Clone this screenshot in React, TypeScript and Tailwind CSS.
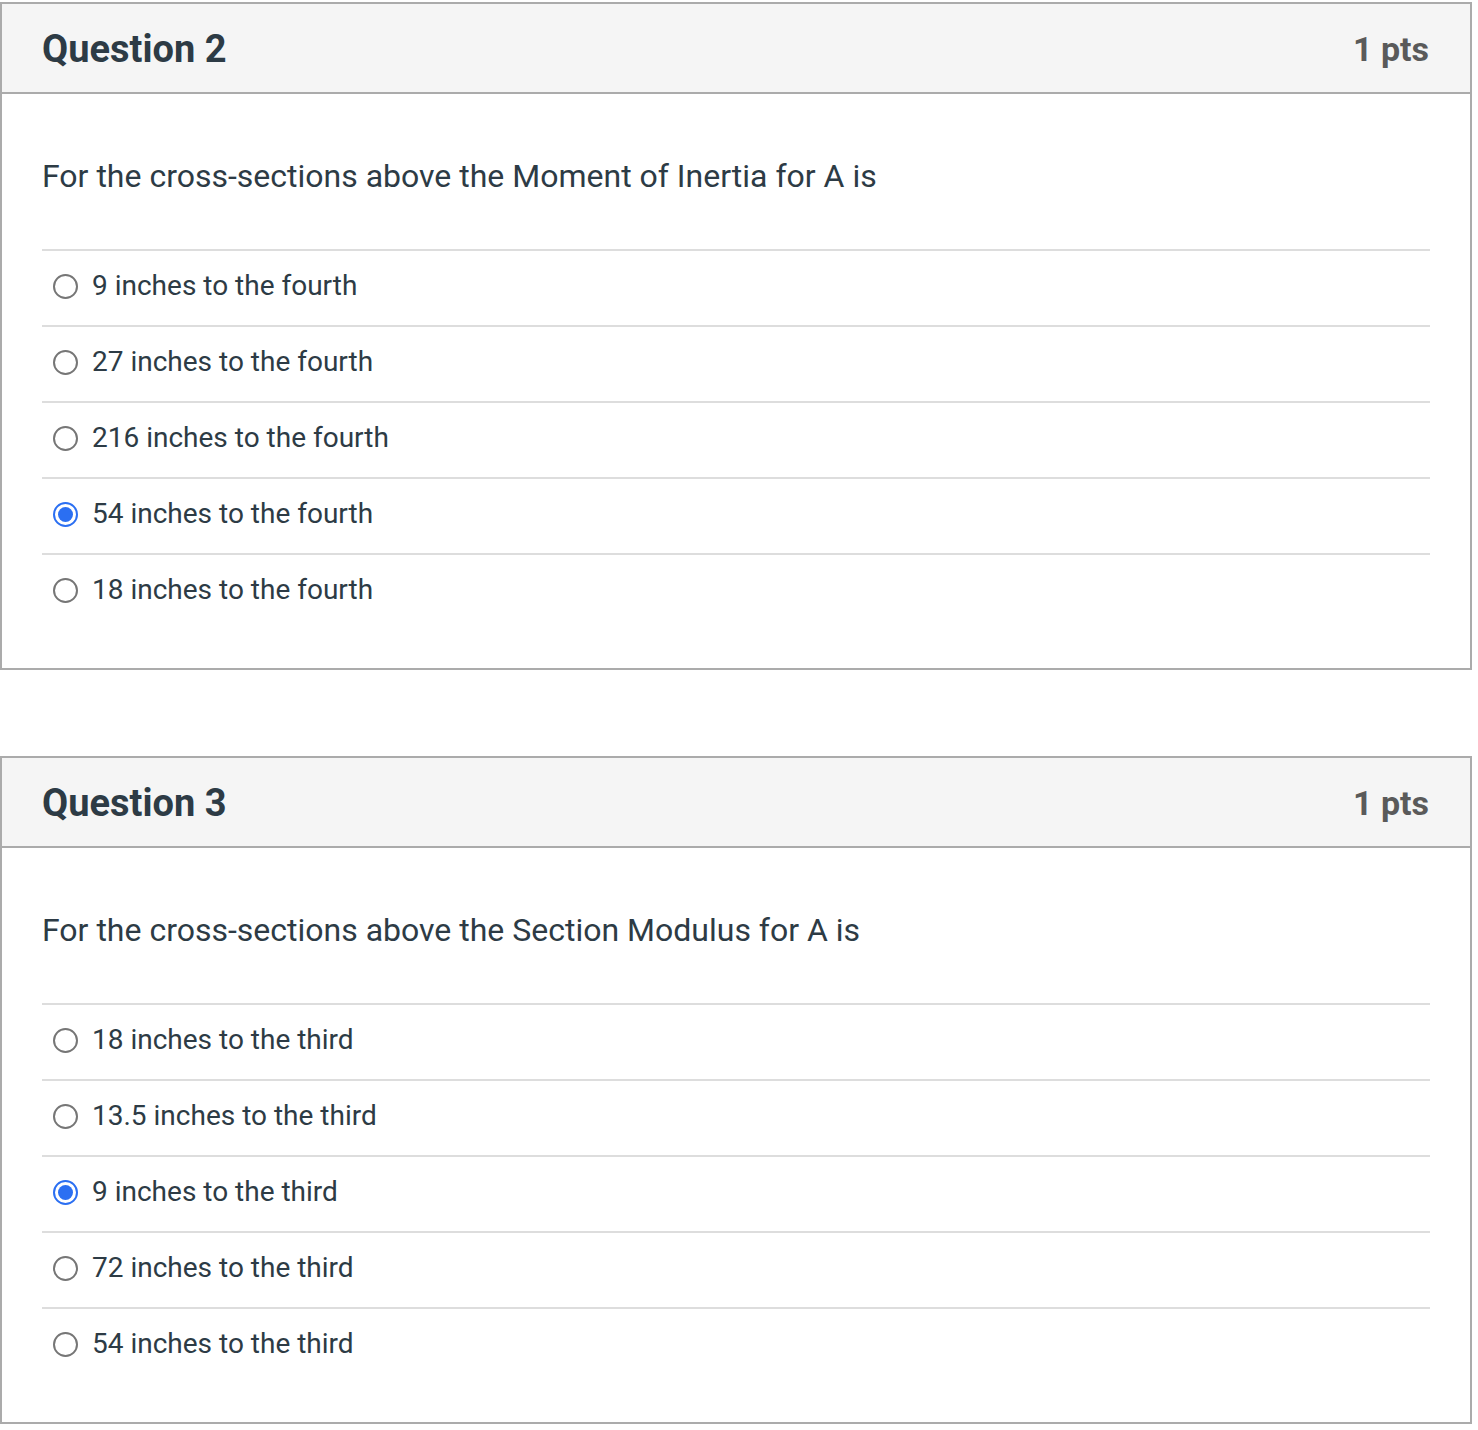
const questions = [
  {
    title: "Question 2",
    pts: "1 pts",
    text: "For the cross-sections above the Moment of Inertia for A is",
    options: [
      "9 inches to the fourth",
      "27 inches to the fourth",
      "216 inches to the fourth",
      "54 inches to the fourth",
      "18 inches to the fourth",
    ],
    selected: 3,
  },
  {
    title: "Question 3",
    pts: "1 pts",
    text: "For the cross-sections above the Section Modulus for A is",
    options: [
      "18 inches to the third",
      "13.5 inches to the third",
      "9 inches to the third",
      "72 inches to the third",
      "54 inches to the third",
    ],
    selected: 2,
  },
]

function Radio({ checked }: { checked: boolean }) {
  if (checked) {
    return (
      <span className="flex h-[25px] w-[25px] shrink-0 items-center justify-center rounded-full border-2 border-[#2b6ff2]">
        <span className="h-[15px] w-[15px] rounded-full bg-[#2b6ff2]" />
      </span>
    )
  }
  return (
    <span className="h-[25px] w-[25px] shrink-0 rounded-full border-2 border-[#767676] bg-white" />
  )
}

function QuestionCard({ q }: { q: (typeof questions)[number] }) {
  return (
    <div className="w-[1472px] border-2 border-[#ababab] bg-white">
      <div className="flex h-[90px] items-center justify-between border-b-2 border-[#ababab] bg-[#f5f5f5] pr-[41px] pl-[40px] pt-[1px]">
        <h2 className="text-[38px] font-bold leading-none text-[#2d3b45]">
          {q.title}
        </h2>
        <span className="text-[34px] font-bold leading-none text-[#5a5a5a]">
          {q.pts}
        </span>
      </div>
      <div className="px-[40px] pt-[63px] pb-[39px]">
        <p className="mb-[54px] text-[32px] leading-[38px] text-[#2d3b45]">
          {q.text}
        </p>
        <div>
          {q.options.map((opt, i) => (
            <div
              key={opt}
              className="flex h-[76px] items-center gap-[14px] border-t-2 border-[#dddddd] pb-[4px] pl-[11px]"
            >
              <Radio checked={i === q.selected} />
              <span className="text-[28px] leading-none text-[#2d3b45]">
                {opt}
              </span>
            </div>
          ))}
        </div>
      </div>
    </div>
  )
}

export default function App() {
  return (
    <div
      className="min-h-[1430px] bg-white pt-[2px]"
      style={{ fontFamily: "Roboto, 'Noto Sans', sans-serif" }}
    >
      <div className="flex flex-col gap-[86px]">
        {questions.map((q) => (
          <QuestionCard key={q.title} q={q} />
        ))}
      </div>
    </div>
  )
}
